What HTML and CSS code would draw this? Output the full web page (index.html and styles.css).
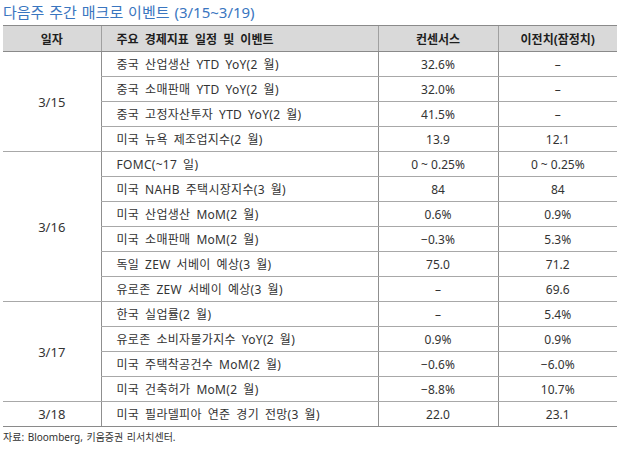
FILE: index.html
```html
<!DOCTYPE html>
<html lang="ko">
<head>
<meta charset="utf-8">
<link rel="stylesheet" href="styles.css">
</head>
<body>
<div class="wrap">
  <div class="title">다음주 주간 매크로 이벤트 (3/15~3/19)</div>
  <table class="tbl">
    <colgroup>
      <col class="c1"><col class="c2"><col class="c3"><col class="c4">
    </colgroup>
    <thead>
      <tr><th>일자</th><th class="left">주요 경제지표 일정 및 이벤트</th><th>컨센서스</th><th>이전치(잠정치)</th></tr>
    </thead>
    <tbody>
      <tr class="grp"><td rowspan="4" class="date">3/15</td><td class="ev">중국 산업생산 YTD YoY(2 월)</td><td>32.6%</td><td>–</td></tr>
      <tr><td class="ev">중국 소매판매 YTD YoY(2 월)</td><td>32.0%</td><td>–</td></tr>
      <tr><td class="ev">중국 고정자산투자 YTD YoY(2 월)</td><td>41.5%</td><td>–</td></tr>
      <tr><td class="ev">미국 뉴욕 제조업지수(2 월)</td><td>13.9</td><td>12.1</td></tr>
      <tr class="grp"><td rowspan="6" class="date">3/16</td><td class="ev">FOMC(~17 일)</td><td>0 ~ 0.25%</td><td>0 ~ 0.25%</td></tr>
      <tr><td class="ev">미국 NAHB 주택시장지수(3 월)</td><td>84</td><td>84</td></tr>
      <tr><td class="ev">미국 산업생산 MoM(2 월)</td><td>0.6%</td><td>0.9%</td></tr>
      <tr><td class="ev">미국 소매판매 MoM(2 월)</td><td>−0.3%</td><td>5.3%</td></tr>
      <tr><td class="ev">독일 ZEW 서베이 예상(3 월)</td><td>75.0</td><td>71.2</td></tr>
      <tr><td class="ev">유로존 ZEW 서베이 예상(3 월)</td><td>–</td><td>69.6</td></tr>
      <tr class="grp"><td rowspan="4" class="date">3/17</td><td class="ev">한국 실업률(2 월)</td><td>–</td><td>5.4%</td></tr>
      <tr><td class="ev">유로존 소비자물가지수 YoY(2 월)</td><td>0.9%</td><td>0.9%</td></tr>
      <tr><td class="ev">미국 주택착공건수 MoM(2 월)</td><td>−0.6%</td><td>−6.0%</td></tr>
      <tr><td class="ev">미국 건축허가 MoM(2 월)</td><td>−8.8%</td><td>10.7%</td></tr>
      <tr class="grp"><td class="date">3/18</td><td class="ev">미국 필라델피아 연준 경기 전망(3 월)</td><td>22.0</td><td>23.1</td></tr>
    </tbody>
  </table>
  <div class="src">자료: Bloomberg, 키움증권 리서치센터.</div>
</div>
</body>
</html>
```
FILE: styles.css
```css
html, body {
  margin: 0;
  padding: 0;
  background: #ffffff;
}
.wrap {
  padding: 0 5px 0 3px;
  font-family: "Noto Sans", "Noto Sans CJK KR", sans-serif;
  color: #333333;
}
.title {
  height: 25px;
  line-height: 25px;
  font-size: 15px;
  color: #3a76c0;
  word-spacing: 1px;
}
.tbl {
  width: 614px;
  border-collapse: collapse;
  table-layout: fixed;
  font-size: 12px;
}
.c1 { width: 98px; }
.c2 { width: 277px; }
.c3 { width: 120px; }
.c4 { width: 119px; }
.tbl th {
  height: 25px;
  background: #d9d9d9;
  font-weight: bold;
  color: #1e1e1e;
  text-align: center;
  padding: 0;
  word-spacing: 3px;
  border-top: 1px solid #8a8a8a;
  border-bottom: 1px solid #8a8a8a;
  border-left: 1px solid #a0a0a0;
}
.tbl th:first-child { border-left: none; }
.tbl th.left {
  text-align: left;
  padding-left: 15px;
}
.tbl td {
  height: 24px;
  padding: 0;
  text-align: center;
  border-bottom: 1px solid #a8a8a8;
  border-left: 1px solid #8f8f8f;
  white-space: nowrap;
}
.tbl td.date {
  border-left: none;
  font-size: 13px;
}
.tbl tr.grp td { border-top: 1px solid #8a8a8a; }
.tbl tbody tr:last-child td { border-bottom: 1px solid #8a8a8a; }
.tbl td.ev {
  text-align: left;
  padding-left: 15px;
  word-spacing: 2.5px;
  letter-spacing: 0.3px;
}
.src {
  margin-top: 2px;
  font-size: 10px;
  line-height: 16px;
  color: #333333;
  word-spacing: 1px;
}
```
